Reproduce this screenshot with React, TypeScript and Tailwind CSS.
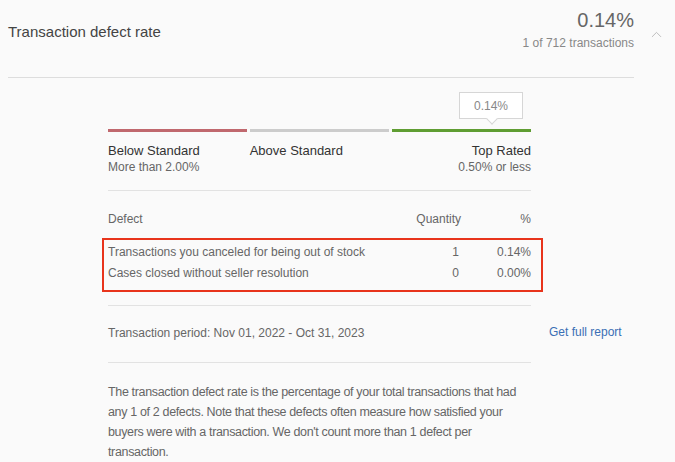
import { ChevronUp } from "lucide-react";

const ROWS = [
  { label: "Transactions you canceled for being out of stock", qty: "1", pct: "0.14%" },
  { label: "Cases closed without seller resolution", qty: "0", pct: "0.00%" },
];

export default function App() {
  return (
    <div className="w-[675px] h-[462px] overflow-hidden bg-[#fafafa] text-[#555] font-['Liberation_Sans',Arial,sans-serif]">
      {/* Header */}
      <div className="flex">
        <div className="ml-[8px] w-[626px]">
          <div className="flex items-start justify-between h-[77px]">
            <div className="pt-[22px] text-[15px] leading-[20px] text-[#444]">Transaction defect rate</div>
            <div className="text-right pt-[8px]">
              <div className="text-[20px] leading-[24px] text-[#666]">0.14%</div>
              <div className="text-[12px] leading-[16px] mt-[3px] text-[#888]">1 of 712 transactions</div>
            </div>
          </div>
          <div className="h-px bg-[#ddd]" />
        </div>
        <div className="pt-[26px] pl-[14px]">
          <ChevronUp size={17} strokeWidth={1.25} className="text-[#b5b5b5]" />
        </div>
      </div>

      {/* Body */}
      <div className="flex">
        <div className="ml-[108px] w-[423px]">
          {/* Rating scale */}
          <div className="relative pt-[51px]">
            <div className="absolute top-[14px] left-[351px] w-[64px] h-[27px] border border-[#d6d6d6] bg-white flex items-center justify-center text-[12px] text-[#888]">
              0.14%
              <div className="absolute -bottom-[5px] left-[28px] w-[8px] h-[8px] bg-white border-r border-b border-[#d6d6d6] rotate-45" />
            </div>
            <div className="flex gap-[3px]">
              <div className="flex-1 h-[3px] bg-[#c0686e]" />
              <div className="flex-1 h-[3px] bg-[#cccccc]" />
              <div className="flex-1 h-[3px] bg-[#5f9d32]" />
            </div>
            <div className="flex mt-[11px]">
              <div className="flex-1">
                <div className="text-[13px] leading-[16px] text-[#333]">Below Standard</div>
                <div className="text-[12px] leading-[16px] text-[#666]">More than 2.00%</div>
              </div>
              <div className="flex-1 pl-[1px]">
                <div className="text-[13px] leading-[16px] text-[#333]">Above Standard</div>
              </div>
              <div className="flex-1 text-right">
                <div className="text-[13px] leading-[16px] text-[#333]">Top Rated</div>
                <div className="text-[12px] leading-[16px] text-[#666]">0.50% or less</div>
              </div>
            </div>
          </div>
          <div className="h-px bg-[#e2e2e2] mt-[15px]" />

          {/* Defects table */}
          <div className="flex text-[12px] leading-[16px] text-[#666] mt-[20px]">
            <div className="flex-1">Defect</div>
            <div className="w-[70px] text-right">Quantity</div>
            <div className="w-[70px] text-right">%</div>
          </div>
          <div className="-ml-[6px] -mr-[12px] mt-[11px] border-2 border-[#e8341c] pl-[4px] pr-[10px] pt-[2px] pb-[6px]">
            {ROWS.map((r) => (
              <div key={r.label} className="flex text-[12px] leading-[21px] text-[#666]">
                <div className="flex-1">{r.label}</div>
                <div className="w-[70px] text-right pr-[2px]">{r.qty}</div>
                <div className="w-[70px] text-right">{r.pct}</div>
              </div>
            ))}
          </div>
          <div className="h-px bg-[#e2e2e2] mt-[13px]" />

          {/* Period */}
          <div className="text-[12px] leading-[16px] text-[#666] mt-[19px] relative">
            Transaction period: Nov 01, 2022 - Oct 31, 2023
            <a className="absolute left-[441px] top-[-1px] whitespace-nowrap text-[#3a6fb5] text-[12px]">Get full report</a>
          </div>
          <div className="h-px bg-[#e2e2e2] mt-[21px]" />

          <p className="mt-[19px] w-[418px] text-[12.5px] leading-[20px] tracking-[-0.35px] text-[#666]">
            The transaction defect rate is the percentage of your total transactions that had any 1 of 2 defects. Note that these defects often measure how satisfied your buyers were with a transaction. We don't count more than 1 defect per transaction.
          </p>
        </div>
      </div>
    </div>
  );
}
